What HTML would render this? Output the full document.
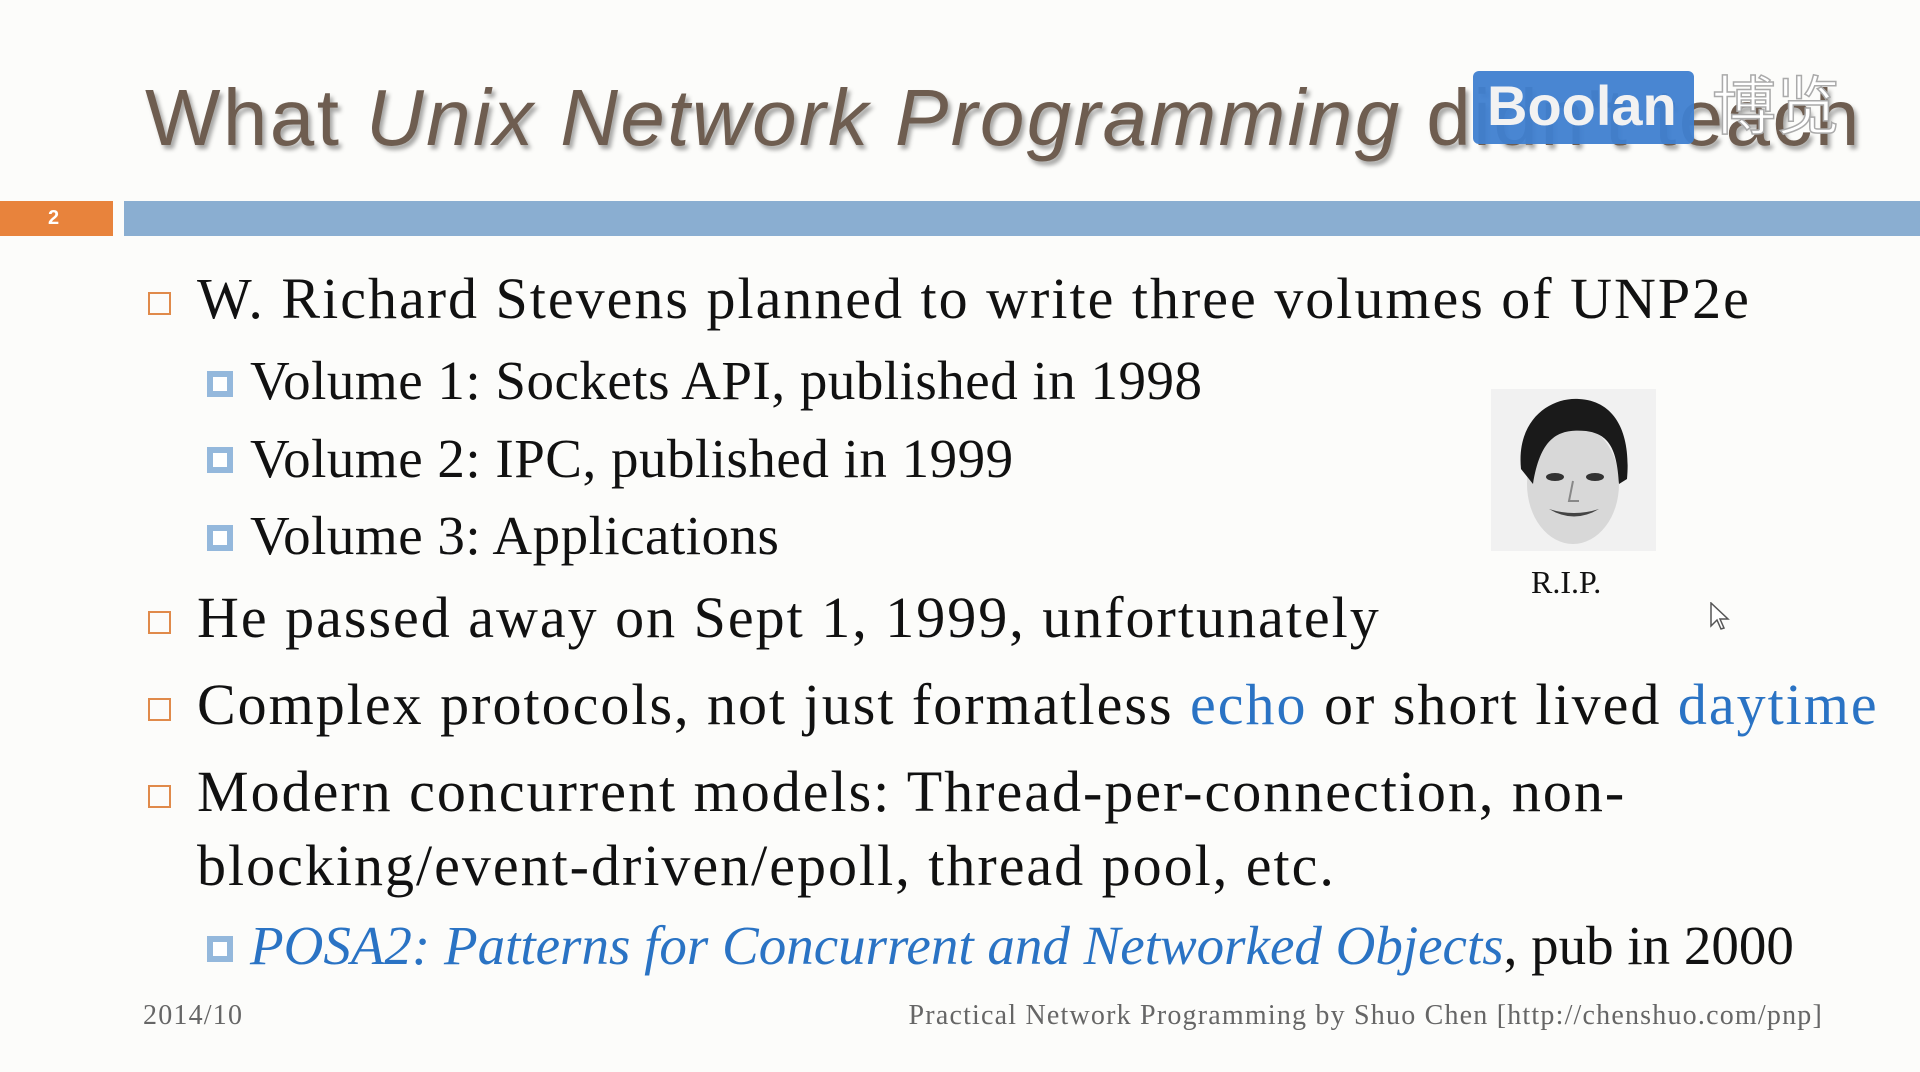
<!DOCTYPE html>
<html><head><meta charset="utf-8"><style>
html,body{margin:0;padding:0}
body{width:1920px;height:1072px;background:#fcfcfa;position:relative;overflow:hidden;font-family:"Liberation Serif",serif;color:#111}
.t{position:absolute;white-space:nowrap;line-height:1}
.title{left:145px;top:78px;font-family:"Liberation Sans",sans-serif;font-size:80px;color:#6e5d50;text-shadow:3px 4px 4px rgba(0,0,0,.35);letter-spacing:2.4px}
.b1{font-size:58px;letter-spacing:2px}
.b2{font-size:55px;letter-spacing:0.5px}
.sq1{position:absolute;width:23px;height:23px;border:2px solid #e08a4a;box-sizing:border-box}
.sq2{position:absolute;width:26px;height:26px;border:6px solid #94b8dc;background:#fff;box-sizing:border-box}
.blue{color:#2a73c4}
.ft{font-size:28px;color:#666;letter-spacing:1.2px}
</style></head><body>
<div class="t title">What <i>Unix Network Programming</i> didn't teach</div>
<div style="position:absolute;left:1473px;top:71px;width:221px;height:73px;background:#3f80d0;border-radius:6px;opacity:.95"></div>
<div class="t" style="left:1487px;top:78px;font-family:'Liberation Sans',sans-serif;font-weight:bold;font-size:56px;color:#f2f2f2">Boolan</div>
<div class="t" style="left:1712px;top:70px;font-family:'Noto Sans CJK SC',sans-serif;font-size:64px;color:#fff;-webkit-text-stroke:1.5px #aaa">博览</div>
<div style="position:absolute;left:0;top:201px;width:113px;height:35px;background:#e8833c"></div>
<div class="t" style="left:48px;top:208px;font-family:'Liberation Sans',sans-serif;font-weight:bold;font-size:20px;color:#fff">2</div>
<div style="position:absolute;left:124px;top:201px;width:1796px;height:35px;background:#8aaed1"></div>

<div class="sq1" style="left:148px;top:292px"></div>
<div class="t b1" style="left:197px;top:270px">W. Richard Stevens planned to write three volumes of UNP2e</div>
<div class="sq2" style="left:207px;top:371px"></div>
<div class="t b2" style="left:250px;top:353px">Volume 1: Sockets API, published in 1998</div>
<div class="sq2" style="left:207px;top:447px"></div>
<div class="t b2" style="left:250px;top:431px">Volume 2: IPC, published in 1999</div>
<div class="sq2" style="left:207px;top:525px"></div>
<div class="t b2" style="left:250px;top:508px">Volume 3: Applications</div>
<div class="sq1" style="left:148px;top:611px"></div>
<div class="t b1" style="left:197px;top:589px">He passed away on Sept 1, 1999, unfortunately</div>
<div class="sq1" style="left:148px;top:698px"></div>
<div class="t b1" style="left:197px;top:676px">Complex protocols, not just formatless <span class="blue">echo</span> or short lived <span class="blue">daytime</span></div>
<div class="sq1" style="left:148px;top:785px"></div>
<div class="t b1" style="left:197px;top:763px">Modern concurrent models: Thread-per-connection, non-</div>
<div class="t b1" style="left:197px;top:837px">blocking/event-driven/epoll, thread pool, etc.</div>
<div class="sq2" style="left:207px;top:936px"></div>
<div class="t b2" style="left:250px;top:918px;letter-spacing:0"><i class="blue">POSA2: Patterns for Concurrent and Networked Objects</i>, pub in 2000</div>

<svg style="position:absolute;left:1491px;top:389px" width="165" height="162" viewBox="0 0 165 162">
<rect width="165" height="162" fill="#f1f1f1"/>
<ellipse cx="82" cy="95" rx="46" ry="60" fill="#d8d8d8"/>
<path d="M30 80 C25 30 60 8 88 10 C125 12 140 45 136 90 L128 95 C126 60 118 45 95 42 C70 40 50 45 42 95 Z" fill="#1a1a1a"/>
<ellipse cx="64" cy="88" rx="9" ry="4" fill="#333"/>
<ellipse cx="104" cy="88" rx="9" ry="4" fill="#333"/>
<path d="M58 120 Q83 135 108 120 Q83 128 58 120Z" fill="#444"/>
<path d="M82 92 L78 112 L88 112" stroke="#888" fill="none" stroke-width="2"/>
</svg>
<div class="t" style="left:1531px;top:566px;font-size:32px">R.I.P.</div>
<svg style="position:absolute;left:1710px;top:602px" width="20" height="30" viewBox="0 0 20 30"><path d="M1 1 L1 24 L7 18 L11 27 L14 26 L10 17 L18 17 Z" fill="#fff" stroke="#555" stroke-width="1.5"/></svg>

<div class="t ft" style="left:143px;top:1002px">2014/10</div>
<div class="t ft" style="right:97px;top:1002px">Practical Network Programming by Shuo Chen [http://chenshuo.com/pnp]</div>
</body></html>
